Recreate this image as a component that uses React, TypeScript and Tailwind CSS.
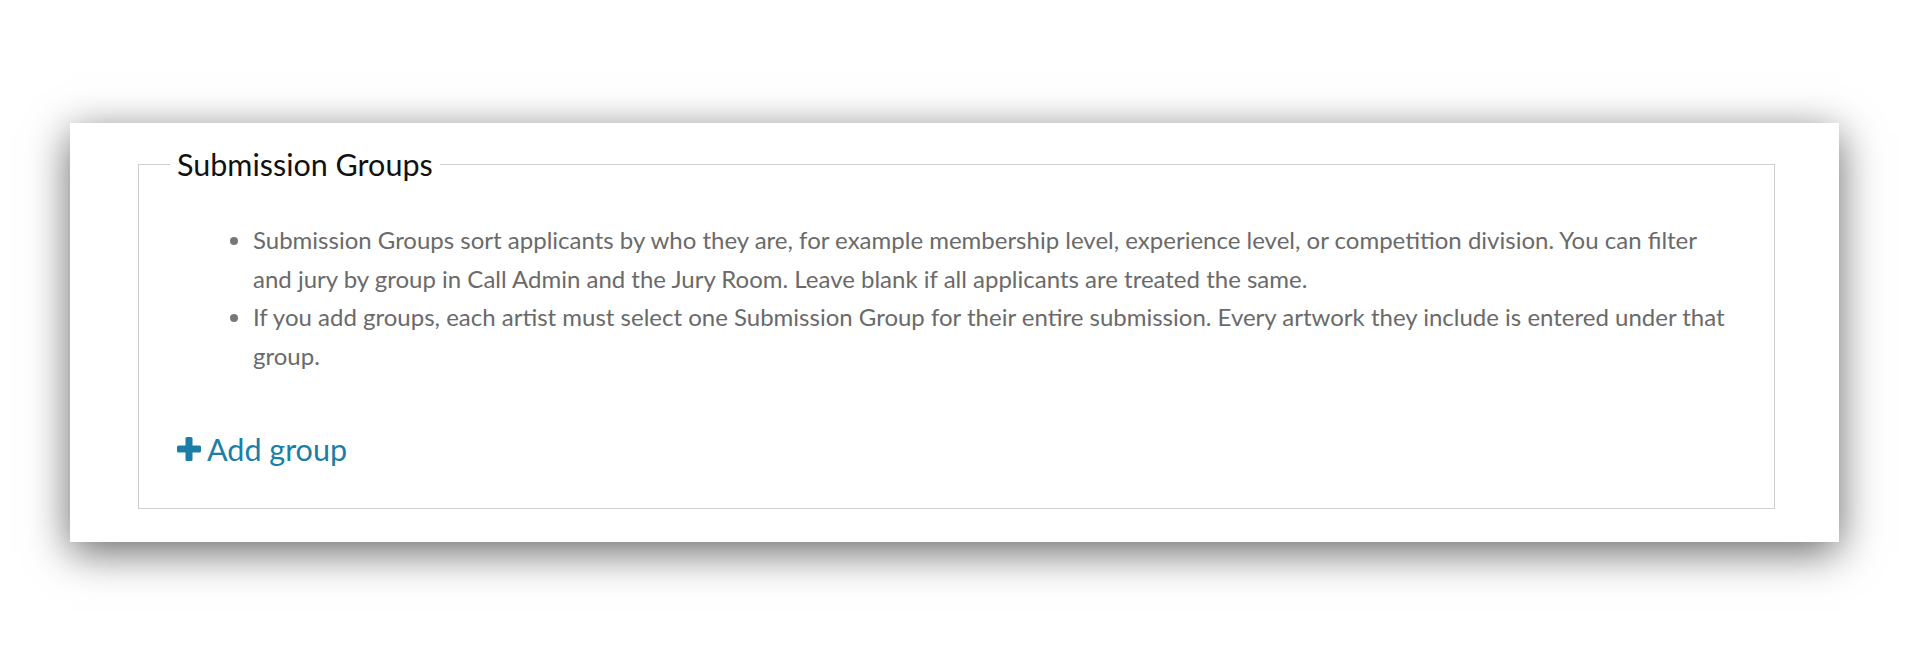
import React from 'react';

const notes = [
  'Submission Groups sort applicants by who they are, for example membership level, experience level, or competition division. You can filter and jury by group in Call Admin and the Jury Room. Leave blank if all applicants are treated the same.',
  'If you add groups, each artist must select one Submission Group for their entire submission. Every artwork they include is entered under that group.',
];

function PlusIcon() {
  return (
    <svg width="24" height="24" viewBox="0 0 24 24" className="shrink-0" aria-hidden="true">
      <rect x="8.5" y="0" width="7" height="24" rx="1.5" fill="currentColor" />
      <rect x="0" y="8.5" width="24" height="7" rx="1.5" fill="currentColor" />
    </svg>
  );
}

export default function App() {
  return (
    <div className="min-h-[667px] bg-white pt-[123px] pl-[70px] font-['Lato','Liberation_Sans',sans-serif]">
      <div className="w-[1769px] h-[419px] bg-white pl-[68px] pr-[64px] pt-[23px] shadow-[0_10px_40px_rgba(0,0,0,0.6)]">
        <fieldset className="h-[363px] border border-[#cfcfcf]">
          <legend className="ml-[31px] px-[7px] text-[30.5px] leading-[36px] text-[#111]">Submission Groups</legend>
          <ul className="mt-[39px] list-disc pl-[114px] pr-[34px] text-[24px] leading-[38.7px] text-[#6a6a6a] marker:text-[#777]">
            {notes.map((n) => (
              <li key={n}>{n}</li>
            ))}
          </ul>
          <button className="mt-[56px] ml-[38px] flex items-center gap-[6px] text-[30.5px] leading-[34px] text-[#1a7ea7]">
            <PlusIcon />
            <span>Add group</span>
          </button>
        </fieldset>
      </div>
    </div>
  );
}
